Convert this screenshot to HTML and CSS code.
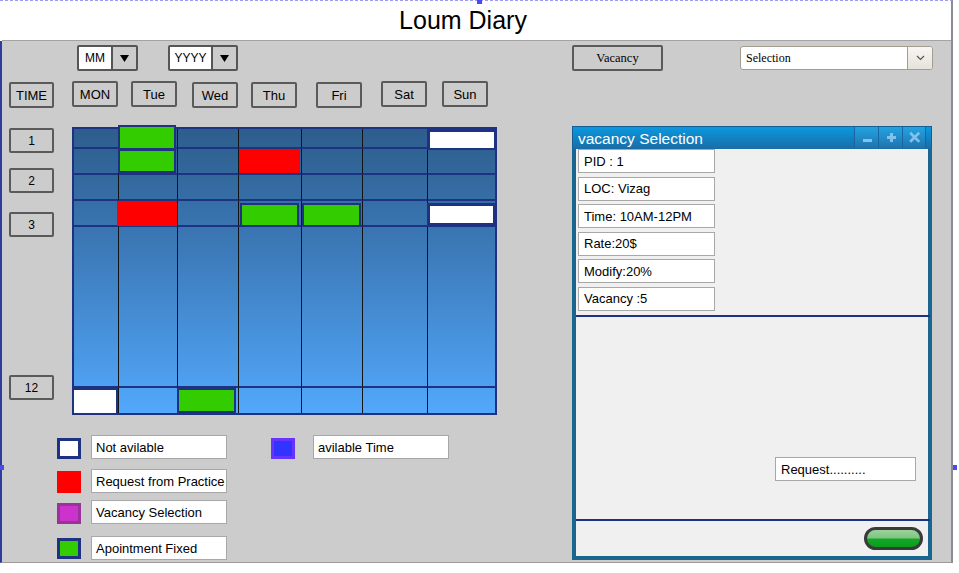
FILE: index.html
```html
<!DOCTYPE html>
<html>
<head>
<meta charset="utf-8">
<title>Loum Diary</title>
<link rel="stylesheet" href="styles.css">
</head>
<body>
<div class="page">
  <header class="title">Loum Diary</header>
  <main class="stage">
    <section class="left">
      <div class="dates">
        <div class="drop mm">
          <span class="drop-val">MM</span>
          <span class="drop-btn"><svg width="9" height="7" viewBox="0 0 9 7"><polygon points="0,0 9,0 4.5,7" fill="#000"/></svg></span>
        </div>
        <div class="drop yy">
          <span class="drop-val">YYYY</span>
          <span class="drop-btn"><svg width="9" height="7" viewBox="0 0 9 7"><polygon points="0,0 9,0 4.5,7" fill="#000"/></svg></span>
        </div>
      </div>

      <div class="days">
        <div class="btn time">TIME</div>
        <div class="btn up">MON</div>
        <div class="btn up">Tue</div>
        <div class="btn">Wed</div>
        <div class="btn">Thu</div>
        <div class="btn">Fri</div>
        <div class="btn up">Sat</div>
        <div class="btn up">Sun</div>
      </div>

      <div class="sched">
        <div class="slots">
          <div class="btn slot">1</div>
          <div class="btn slot s2">2</div>
          <div class="btn slot s3">3</div>
          <div class="btn slot s12">12</div>
        </div>
        <div class="cal">
          <!-- row 1 -->
          <div class="c"></div>
          <div class="c"><span class="blk green g1"></span></div>
          <div class="c"></div>
          <div class="c"></div>
          <div class="c"></div>
          <div class="c"></div>
          <div class="c"><span class="blk white w1"></span></div>
          <!-- row 2 -->
          <div class="c"></div>
          <div class="c"><span class="blk green g2"></span></div>
          <div class="c"></div>
          <div class="c"><span class="blk red r1"></span></div>
          <div class="c"></div>
          <div class="c"></div>
          <div class="c"></div>
          <!-- row 3 -->
          <div class="c"></div>
          <div class="c"></div>
          <div class="c"></div>
          <div class="c"></div>
          <div class="c"></div>
          <div class="c"></div>
          <div class="c"></div>
          <!-- row 4 -->
          <div class="c"></div>
          <div class="c"><span class="blk red r2"></span></div>
          <div class="c"></div>
          <div class="c"><span class="blk green g3"></span></div>
          <div class="c"><span class="blk green g4"></span></div>
          <div class="c"></div>
          <div class="c"><span class="blk white w2"></span></div>
          <!-- row 5 -->
          <div class="c"></div>
          <div class="c"></div>
          <div class="c"></div>
          <div class="c"></div>
          <div class="c"></div>
          <div class="c"></div>
          <div class="c"></div>
          <!-- row 6 -->
          <div class="c"><span class="blk white w3"></span></div>
          <div class="c"></div>
          <div class="c"><span class="blk green g5"></span></div>
          <div class="c"></div>
          <div class="c"></div>
          <div class="c"></div>
          <div class="c"></div>
        </div>
      </div>

      <div class="legend">
        <div class="lrow">
          <span class="sw sw-white"></span>
          <span class="lbl">Not avilable</span>
          <span class="sw sw-blue sw-second"></span>
          <span class="lbl">avilable Time</span>
        </div>
        <div class="lrow lr2">
          <span class="sw sw-red"></span>
          <span class="lbl">Request from Practice</span>
        </div>
        <div class="lrow lr3">
          <span class="sw sw-purple"></span>
          <span class="lbl">Vacancy Selection</span>
        </div>
        <div class="lrow lr4">
          <span class="sw sw-green"></span>
          <span class="lbl">Apointment Fixed</span>
        </div>
      </div>
    </section>

    <section class="right">
      <div class="rtop">
        <div class="btn vac">Vacancy</div>
        <div class="combo">
          <span class="combo-val">Selection</span>
          <span class="combo-btn"><svg width="9" height="6" viewBox="0 0 9 6"><polyline points="1,1 4.5,4.5 8,1" fill="none" stroke="#555" stroke-width="1.2"/></svg></span>
        </div>
      </div>

      <div class="win">
        <div class="win-bar">
          <span class="win-title">vacancy Selection</span>
          <span class="win-tools">
            <span class="tool"><svg width="23" height="21" viewBox="0 0 23 21"><rect x="8" y="12" width="9" height="3" fill="#80c2ec"/></svg></span>
            <span class="tool"><svg width="23" height="21" viewBox="0 0 23 21"><rect x="11" y="6" width="3" height="9" fill="#80c2ec"/><rect x="8" y="9" width="9" height="3" fill="#80c2ec"/></svg></span>
            <span class="tool"><svg width="23" height="21" viewBox="0 0 23 21"><path d="M8.5 6.5 L16 14 M16 6.5 L8.5 14" stroke="#80c2ec" stroke-width="2.8" stroke-linecap="square"/></svg></span>
          </span>
        </div>
        <div class="win-body">
          <div class="fields">
            <div class="field">PID : 1</div>
            <div class="field">LOC: Vizag</div>
            <div class="field">Time: 10AM-12PM</div>
            <div class="field">Rate:20$</div>
            <div class="field">Modify:20%</div>
            <div class="field">Vacancy :5</div>
          </div>
          <div class="rule"></div>
          <div class="lower">
            <div class="field req">Request..........</div>
          </div>
          <div class="rule"></div>
          <div class="foot">
            <span class="go"></span>
          </div>
        </div>
      </div>
    </section>
  </main>
  <span class="handle h-top"></span>
  <span class="handle h-left"></span>
  <span class="handle h-right"></span>
</div>
</body>
</html>
```

FILE: styles.css
```css
* { box-sizing: border-box; }

html, body {
  margin: 0;
  padding: 0;
  background: #ffffff;
}

body {
  width: 959px;
  height: 573px;
  overflow: hidden;
  font-family: "Liberation Sans", Arial, sans-serif;
  font-size: 13px;
  color: #000;
}

.page {
  position: relative;
  width: 953px;
  border-top: 1px dashed #9b9bf0;
  border-right: 2px solid #8c8c98;
}

.title {
  height: 40px;
  margin-left: 2px;
  background: #ffffff;
  border-bottom: 1px solid #a3a3a3;
  font-size: 25px;
  line-height: 39px;
  text-align: center;
  padding-right: 27px;
}

.stage {
  display: flex;
  height: 522px;
  background: #cccccc;
  border-left: 2px solid #2d3d9e;
  border-bottom: 1px solid #9a9a9a;
  padding: 4px 0 0 7px;
}

/* ---------- left column ---------- */
.left {
  width: 489px;
  display: flex;
  flex-direction: column;
}

.dates {
  display: flex;
  gap: 30px;
  padding-left: 68px;
  height: 26px;
}

.drop {
  display: flex;
  height: 26px;
  border: 2px solid #565656;
  border-radius: 2px;
  background: #cccccc;
}
.drop.mm { width: 61px; }
.drop.yy { width: 70px; }

.drop-val {
  display: flex;
  align-items: center;
  justify-content: center;
  background: #ffffff;
  border-right: 2px solid #565656;
  font-size: 12px;
}
.mm .drop-val { width: 34px; }
.yy .drop-val { width: 43px; }

.drop-btn {
  flex: 1;
  display: flex;
  align-items: center;
  justify-content: center;
}

.days {
  display: grid;
  grid-template-columns: 63px 59px 61px 59px 65px 65px 61px 46px;
  align-items: start;
  margin-top: 11px;
  height: 26px;
}

.btn {
  display: flex;
  align-items: center;
  justify-content: center;
  width: 46px;
  height: 26px;
  border: 2px solid #5a5a5a;
  border-radius: 2px;
  background: #cccccc;
  font-size: 13px;
}
.days .time { width: 45px; }
.days .up { margin-top: -1px; }

.sched {
  display: flex;
  margin-top: 19px;
  height: 288px;
}

.slots {
  width: 45px;
  display: flex;
  flex-direction: column;
  padding-top: 1px;
}
.slot {
  width: 45px;
  height: 25px;
  font-size: 12px;
}
.slot.s2 { margin-top: 15px; }
.slot.s3 { margin-top: 19px; }
.slot.s12 { margin-top: 138px; }

.cal {
  margin-left: 18px;
  width: 425px;
  height: 288px;
  border: 2px solid #1e3282;
  display: grid;
  grid-template-columns: 45px 59px 61px 63px 61px 65px 67px;
  grid-template-rows: 20px 26px 26px 26px 161px 25px;
  background: linear-gradient(#2d5d8c, #3b78b6 40%, #52a8fc);
}

.c {
  position: relative;
  border-right: 1px solid #141414;
  border-bottom: 2px solid #1e3282;
}
.c:nth-child(7n) { border-right: 0; }
.c:nth-child(n+36) { border-bottom: 0; }

.blk {
  position: absolute;
  z-index: 1;
  display: block;
}
.blk.green { background: #33cc00; border: 2px solid #1e3282; }
.blk.red { background: #ff0000; }
.blk.white { background: #ffffff; border: 2px solid #1e3282; }

.g1 { left: -1px; top: -4px; width: 58px; height: 25px; }
.g2 { left: -1px; top: 0; width: 58px; height: 24px; }
.r1 { left: 0; top: 0; width: 61px; height: 24px; }
.w1 { left: -1px; top: 0; width: 70px; height: 21px; border-width: 3px 3px 2px 3px !important; }
.r2 { left: -2px; top: 0; width: 60px; height: 25px; }
.g3 { left: 1px; top: 2px; width: 59px; height: 24px; }
.g4 { left: 0; top: 2px; width: 59px; height: 24px; }
.w2 { left: -1px; top: 2px; width: 69px; height: 24px; border-width: 3px 3px 4px 3px !important; }
.w3 { left: -2px; top: 0; width: 46px; height: 27px; }
.g5 { left: -1px; top: 0; width: 59px; height: 25px; }

.legend {
  margin-top: 20px;
  padding-left: 48px;
  display: flex;
  flex-direction: column;
}
.lrow {
  display: flex;
  align-items: flex-end;
}
.lr2 { margin-top: 10px; }
.lr3 { margin-top: 7px; }
.lr4 { margin-top: 12px; }

.sw {
  width: 24px;
  height: 21px;
  margin-right: 10px;
  border: 3px solid #1e3282;
}
.sw-white { background: #ffffff; }
.sw-red { background: #ff0000; border: 0; height: 22px; margin-bottom: 0; }
.sw-purple { background: #cc33cc; border-color: #993399; }
.sw-green { background: #33cc00; margin-bottom: 1px; }
.sw-blue { background: #3333ff; border-color: #6633ff; }
.sw-second { margin-left: 44px; margin-right: 18px; }

.lbl {
  display: flex;
  align-items: center;
  width: 136px;
  height: 24px;
  padding-left: 4px;
  background: #ffffff;
  border: 1px solid #a8a8a8;
  font-size: 13px;
  white-space: nowrap;
}

/* ---------- right column ---------- */
.right {
  margin-left: 74px;
  width: 361px;
  display: flex;
  flex-direction: column;
}

.rtop {
  display: flex;
  height: 26px;
}

.vac {
  width: 91px;
  font-family: "Liberation Serif", "Times New Roman", serif;
  font-size: 12.5px;
}

.combo {
  display: flex;
  margin-left: 77px;
  margin-top: 1px;
  width: 193px;
  height: 24px;
  background: #ffffff;
  border: 1px solid #a39d90;
  border-radius: 3px;
}
.combo-val {
  flex: 1;
  display: flex;
  align-items: center;
  padding-left: 5px;
  font-family: "Liberation Serif", "Times New Roman", serif;
  font-size: 12px;
}
.combo-btn {
  width: 25px;
  display: flex;
  align-items: center;
  justify-content: center;
  border-left: 1px solid #a39d90;
  border-radius: 0 2px 2px 0;
  background: linear-gradient(#f8f6f2, #e6e2da);
}

.win {
  margin-top: 55px;
  width: 360px;
  height: 434px;
  display: flex;
  flex-direction: column;
}

.win-bar {
  display: flex;
  align-items: flex-start;
  height: 23px;
  padding-left: 5px;
  background: linear-gradient(#0b98df, #1a6ca6);
  border: 1px solid #155f92;
  border-bottom: 0;
  color: #ffffff;
}
.win-title {
  flex: 1;
  font-size: 15.5px;
  line-height: 21px;
  padding-top: 1px;
}
.win-tools {
  display: flex;
  margin-right: 5px;
  height: 21px;
}
.tool {
  display: flex;
  width: 24px;
  height: 21px;
  border-left: 1px solid #1566a2;
  background: linear-gradient(rgba(255,255,255,0.10), rgba(255,255,255,0.03));
}
.tool:last-child { border-right: 1px solid #1566a2; }

.win-body {
  flex: 1;
  display: flex;
  flex-direction: column;
  background: #f0f0f0;
  border: 4px solid #1a6690;
  border-top: 0;
}

.fields {
  height: 166px;
  padding-left: 2px;
  display: flex;
  flex-direction: column;
  gap: 3.6px;
}

.field {
  display: flex;
  align-items: center;
  width: 137px;
  height: 24px;
  padding-left: 5px;
  background: #ffffff;
  border: 1px solid #a8a8a8;
  font-size: 13px;
  white-space: nowrap;
}

.rule {
  height: 2px;
  background: #1e3282;
  margin-right: -2px;
}

.lower {
  height: 202px;
  display: flex;
  justify-content: flex-end;
  align-items: flex-start;
  padding: 140px 12px 0 0;
}
.field.req { width: 141px; }

.foot {
  height: 35px;
  display: flex;
  justify-content: flex-end;
  align-items: flex-start;
  padding: 6px 5px 0 0;
}
.go {
  display: block;
  width: 59px;
  height: 23px;
  border: 3px solid #3a3a3a;
  border-radius: 12px;
  background: linear-gradient(#9ad29a 0%, #80c680 46%, #14a828 54%, #0a9c1c 100%);
}

/* selection handles of the mockup frame */
.handle {
  position: absolute;
  width: 4px;
  height: 5px;
  background: #4a4af0;
}
.h-top { left: 477px; top: -1px; height: 4px; width: 5px; }
.h-left { left: 0; top: 464px; }
.h-right { left: 953px; top: 464px; }
```
